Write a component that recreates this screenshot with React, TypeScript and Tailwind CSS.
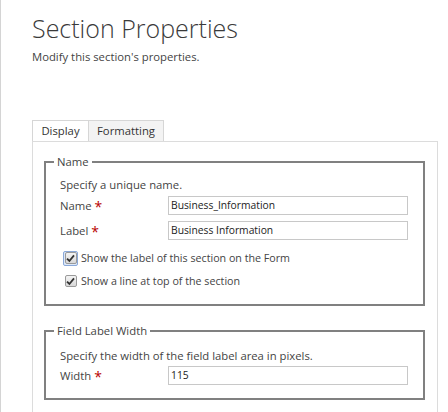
import React from 'react';

const font = { fontFamily: '"Open Sans", "Noto Sans", "Liberation Sans", sans-serif' };

function Required() {
  return <span className="ml-[3px] text-[14px] leading-none text-[#b80000]">*</span>;
}

function Field({ label, value }: { label: string; value: string }) {
  return (
    <div className="flex h-[19px] items-center">
      <div className="flex w-[122px] items-center pl-[14px] pt-[2px] text-[11.3px] text-[#444]">
        {label}
        <Required />
      </div>
      <div className="flex h-[19px] w-[240px] items-center border border-[#c8c8c8] bg-white pl-[2px] text-[10.3px] text-[#222]">
        {value}
      </div>
    </div>
  );
}

function Check({ label, focused }: { label: string; focused?: boolean }) {
  return (
    <div className="flex h-[18px] items-center pl-[17px]">
      <span
        className={`flex h-[15px] w-[15px] items-center justify-center rounded-[2px] ${
          focused ? 'border border-[#8aa8d8] bg-[#dde8f8]' : 'border border-transparent'
        }`}
      >
        <span className="flex h-[12px] w-[12px] items-center justify-center rounded-[2px] border border-[#9a9a9a] bg-gradient-to-b from-[#f4f4f4] to-[#d8d8d8]">
          <svg width="9" height="9" viewBox="0 0 9 9">
            <path d="M1 4.6 L3.4 7 L8 1.4" fill="none" stroke="#333" strokeWidth="1.8" />
          </svg>
        </span>
      </span>
      <span className="ml-[3px] text-[10.7px] text-[#444]">{label}</span>
    </div>
  );
}

export default function App() {
  return (
    <div className="h-[412px] w-[448px] overflow-hidden border-l border-[#d4d4d4] bg-white pl-[31px] pt-[11px]" style={font}>
      <h1 className="text-[25px] font-light leading-[34px] text-[#3a3a3a]">Section Properties</h1>
      <p className="mt-[4px] text-[11.3px] leading-[16px] text-[#444]">Modify this section's properties.</p>

      <div className="mt-[55px] flex h-[21px] items-stretch text-[11.3px] text-[#333]">
        <div className="flex w-[56px] items-center justify-center border-l border-t border-[#d6d6d6] bg-white">Display</div>
        <div className="flex w-[76px] items-center justify-center border-l border-r border-t border-[#d6d6d6] bg-[#f3f3f3]">
          Formatting
        </div>
      </div>

      <div className="h-[300px] w-[406px] border-l border-r border-t border-[#dcdcdc] pl-[11px] pr-[12px] pt-[12px]">
        <fieldset className="h-[152px] border-2 border-[#808080]">
          <legend className="ml-[8px] px-[3px] text-[11.3px] leading-[16px] text-[#444]">Name</legend>
          <p className="mt-[7px] pl-[14px] text-[11.3px] leading-[16px] text-[#444]">Specify a unique name.</p>
          <div className="mt-[3px] flex flex-col gap-[6px]">
            <Field label="Name" value="Business_Information" />
            <Field label="Label" value="Business Information" />
          </div>
          <div className="mt-[9px] flex flex-col gap-[5px]">
            <Check label="Show the label of this section on the Form" focused />
            <Check label="Show a line at top of the section" />
          </div>
        </fieldset>

        <fieldset className="mt-[17px] h-[77px] border-2 border-[#808080]">
          <legend className="ml-[8px] px-[3px] text-[11.3px] leading-[16px] text-[#444]">Field Label Width</legend>
          <p className="mt-[9px] pl-[14px] text-[11.3px] leading-[16px] text-[#444]">
            Specify the width of the field label area in pixels.
          </p>
          <div className="mt-[2px]">
            <Field label="Width" value="115" />
          </div>
        </fieldset>
      </div>
    </div>
  );
}
